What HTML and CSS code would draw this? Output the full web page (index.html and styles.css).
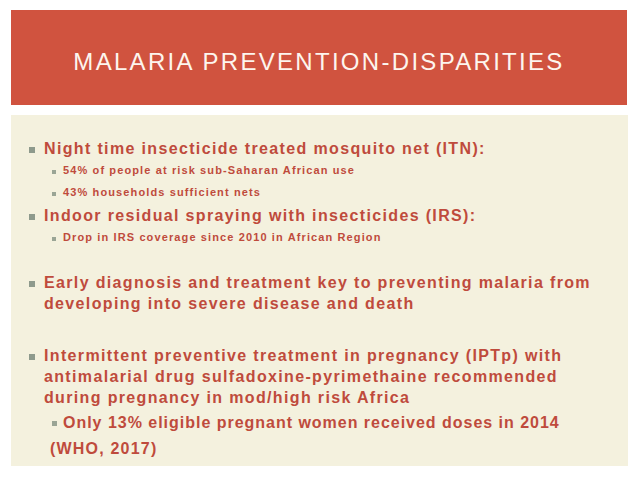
FILE: index.html
```html
<!DOCTYPE html>
<html lang="en">
<head>
<meta charset="utf-8">
<title>Malaria Prevention-Disparities</title>
<link rel="stylesheet" href="styles.css">
</head>
<body>
<div class="slide">
  <header class="title-bar">
    <h1 class="title">MALARIA PREVENTION-DISPARITIES</h1>
  </header>
  <section class="content">
    <div class="row main first">
      <span class="bullet"></span>
      <div class="text">Night time insecticide treated mosquito net (ITN):</div>
    </div>
    <div class="row sub">
      <span class="bullet"></span>
      <div class="text">54% of people at risk sub-Saharan African use</div>
    </div>
    <div class="row sub">
      <span class="bullet"></span>
      <div class="text">43% households sufficient nets</div>
    </div>
    <div class="row main after-sub">
      <span class="bullet"></span>
      <div class="text">Indoor residual spraying with insecticides (IRS):</div>
    </div>
    <div class="row sub">
      <span class="bullet"></span>
      <div class="text">Drop in IRS coverage since 2010 in African Region</div>
    </div>
    <div class="row main gap-a">
      <span class="bullet"></span>
      <div class="text">Early diagnosis and treatment key to preventing malaria from<br>developing into severe disease and death</div>
    </div>
    <div class="row main gap-b">
      <span class="bullet"></span>
      <div class="text">Intermittent preventive treatment in pregnancy (IPTp) with<br>antimalarial drug sulfadoxine-pyrimethaine recommended<br>during pregnancy in mod/high risk Africa</div>
    </div>
    <div class="row sub-large">
      <span class="bullet"></span>
      <div class="text">Only 13% eligible pregnant women received doses in 2014</div>
    </div>
    <div class="cite">(WHO, 2017)</div>
  </section>
</div>
</body>
</html>
```
FILE: styles.css
```css
html, body {
  margin: 0;
  padding: 0;
  background: #ffffff;
}

.slide {
  width: 640px;
  height: 480px;
  padding-top: 10px;
  box-sizing: border-box;
  font-family: "Liberation Sans", Arial, sans-serif;
}

.title-bar {
  margin: 0 13px 0 11px;
  height: 95px;
  background: #d0533f;
  display: flex;
  align-items: center;
  justify-content: center;
  padding-top: 8px;
  box-sizing: border-box;
}

.title {
  margin: 0;
  font-family: "Liberation Sans", Arial, sans-serif;
  font-weight: normal;
  font-size: 24px;
  letter-spacing: 2.3px;
  color: #fdf5ee;
  white-space: nowrap;
}

.content {
  margin: 10px 12px 0 11px;
  height: 351px;
  background: #f4f1de;
  padding-top: 23px;
  box-sizing: border-box;
  color: #bf4b3c;
  font-weight: bold;
}

.row {
  display: flex;
  align-items: flex-start;
}

.row .text {
  line-height: 21px;
  white-space: nowrap;
}

.main {
  padding-left: 18px;
  font-size: 16px;
  letter-spacing: 1.35px;
}

.main .bullet {
  width: 6px;
  height: 6px;
  margin-top: 9px;
  margin-right: 9px;
  background: #8e9a8c;
  flex: none;
}

.sub {
  padding-left: 41px;
  font-size: 11px;
  letter-spacing: 1.12px;
  margin-top: 1px;
}

.sub .bullet {
  width: 4px;
  height: 4px;
  margin-top: 10px;
  margin-right: 7px;
  background: #9aa595;
  flex: none;
}

.after-sub {
  margin-top: 2px;
}

.gap-a {
  margin-top: 24px;
}

.gap-b {
  margin-top: 31px;
}

.sub-large {
  padding-left: 41px;
  font-size: 16px;
  letter-spacing: 0.98px;
  margin-top: 4px;
}

.sub-large .bullet {
  width: 5px;
  height: 5px;
  margin-top: 9px;
  margin-right: 6px;
  background: #9aa595;
  flex: none;
}

.cite {
  padding-left: 39px;
  font-size: 16px;
  letter-spacing: 1.2px;
  line-height: 21px;
  margin-top: 5px;
}
```
